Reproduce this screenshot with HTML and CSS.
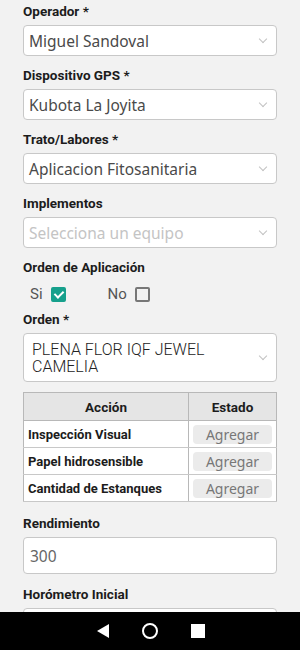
FILE: index.html
```html
<!DOCTYPE html>
<html>
<head>
	<title>Aplicación</title>
	<meta charset="UTF-8">
	<link rel="stylesheet" href="styles.css">
</head>
<body>
	<div class="screen">
		<div class="form">
			<div class="field">
				<label class="label">Operador *</label>
				<div class="select"><span class="value">Miguel Sandoval</span><span class="chevron"></span></div>
			</div>
			<div class="field">
				<label class="label">Dispositivo GPS *</label>
				<div class="select"><span class="value">Kubota La Joyita</span><span class="chevron"></span></div>
			</div>
			<div class="field">
				<label class="label">Trato/Labores *</label>
				<div class="select"><span class="value">Aplicacion Fitosanitaria</span><span class="chevron"></span></div>
			</div>
			<div class="field">
				<label class="label">Implementos</label>
				<div class="select"><span class="value placeholder">Selecciona un equipo</span><span class="chevron"></span></div>
			</div>
			<div class="field checks-field">
				<label class="label">Orden de Aplicación</label>
				<div class="checks">
					<span class="check">Si <span class="box on"></span></span>
					<span class="check">No <span class="box"></span></span>
				</div>
			</div>
			<div class="field tight">
				<label class="label">Orden *</label>
				<div class="select tall"><span class="value upper">PLENA FLOR IQF JEWEL CAMELIA</span><span class="chevron"></span></div>
			</div>
			<table class="actions">
				<tr>
					<th class="col-a">Acción</th>
					<th class="col-b">Estado</th>
				</tr>
				<tr>
					<td>Inspección Visual</td>
					<td class="cell-btn"><span class="btn">Agregar</span></td>
				</tr>
				<tr>
					<td>Papel hidrosensible</td>
					<td class="cell-btn"><span class="btn">Agregar</span></td>
				</tr>
				<tr>
					<td>Cantidad de Estanques</td>
					<td class="cell-btn"><span class="btn">Agregar</span></td>
				</tr>
			</table>
			<div class="field wide">
				<label class="label">Rendimiento</label>
				<div class="input">300</div>
			</div>
			<div class="field wide">
				<label class="label">Horómetro Inicial</label>
				<div class="input"></div>
			</div>
		</div>
		<div class="navbar">
			<span class="nav-back"></span>
			<span class="nav-home"></span>
			<span class="nav-recent"></span>
		</div>
	</div>
</body>
</html>
```

FILE: styles.css
```css
*{
	margin: 0;
	padding: 0;
	box-sizing: border-box;
}
body{
	width: 300px;
	height: 650px;
	overflow: hidden;
	background: #f2f2f2;
	font-family: Roboto, "Liberation Sans", sans-serif;
	color: #1c1c1c;
}
.screen{
	height: 650px;
	display: flex;
	flex-direction: column;
}
.form{
	flex: 1;
	overflow: hidden;
	padding: 3px 23px 0;
}
.field{
	display: flex;
	flex-direction: column;
	gap: 5px;
	margin-bottom: 11px;
}
.field.wide{
	margin-bottom: 12px;
}
.label{
	font-size: 13.5px;
	font-weight: bold;
	line-height: 17px;
}
.select, .input{
	height: 31px;
	flex: none;
	background: #fff;
	border: 1px solid #c8c8c8;
	border-radius: 4px;
	display: flex;
	align-items: center;
	justify-content: space-between;
	padding: 0 10px 0 5px;
	font-family: "Noto Sans", sans-serif;
	font-size: 15.5px;
	color: #4a4a4a;
}
.input{
	height: 37px;
	padding-left: 6px;
	color: #666;
}
.select.tall{
	height: 49px;
	padding-left: 8px;
}
.value.placeholder{
	color: #c4c4c4;
}
.value.upper{
	width: 215px;
	font-family: Roboto, sans-serif;
	font-weight: 300;
	font-size: 16px;
	line-height: 17px;
	color: #222;
}
.chevron{
	width: 6px;
	height: 6px;
	border-right: 1.5px solid #c2c2c2;
	border-bottom: 1.5px solid #c2c2c2;
	transform: rotate(45deg);
	margin-top: -3px;
	flex: none;
}
.checks-field{
	gap: 3px;
	margin-bottom: 2px;
}
.checks{
	display: flex;
	gap: 42px;
	padding-left: 7px;
	height: 30px;
	align-items: center;
}
.check{
	display: flex;
	align-items: center;
	gap: 8px;
	font-size: 15px;
	color: #555;
}
.box{
	width: 15px;
	height: 15px;
	border: 2px solid #777;
	border-radius: 2px;
	position: relative;
}
.box.on{
	background: #16a08c;
	border-color: #16a08c;
}
.box.on::after{
	content: "";
	position: absolute;
	left: 3.5px;
	top: 0.5px;
	width: 4px;
	height: 7px;
	border-right: 2px solid #fff;
	border-bottom: 2px solid #fff;
	transform: rotate(45deg);
}
.field.tight{
	margin-bottom: 10px;
}
.actions{
	width: 254px;
	border-collapse: collapse;
	border: 1px solid #b8b8b8;
	margin-bottom: 13px;
}
.actions th{
	background: #e5e5e5;
	height: 28px;
	font-size: 13.5px;
	font-weight: bold;
	border: 1px solid #b8b8b8;
}
.actions .col-a{
	width: 165px;
}
.actions td{
	background: #fff;
	height: 27px;
	font-size: 13px;
	font-weight: bold;
	padding-left: 4px;
	border-bottom: 1px solid #c8c8c8;
	border-left: 1px solid #b8b8b8;
}
.actions .cell-btn{
	padding: 0 4px;
}
.btn{
	display: block;
	height: 19px;
	line-height: 19px;
	background: #ebebeb;
	border-radius: 4px;
	text-align: center;
	font-family: "Noto Sans", sans-serif;
	font-size: 14px;
	font-weight: normal;
	color: #777;
}
.navbar{
	height: 38px;
	flex: none;
	background: #000;
	display: flex;
	justify-content: center;
	align-items: center;
	gap: 33px;
	padding-left: 2px;
}
.nav-back{
	width: 0;
	height: 0;
	border-top: 7px solid transparent;
	border-bottom: 7px solid transparent;
	border-right: 12px solid #fff;
}
.nav-home{
	width: 16px;
	height: 16px;
	border-radius: 50%;
	border: 2px solid #fff;
}
.nav-recent{
	width: 14px;
	height: 14px;
	background: #fff;
}
```
